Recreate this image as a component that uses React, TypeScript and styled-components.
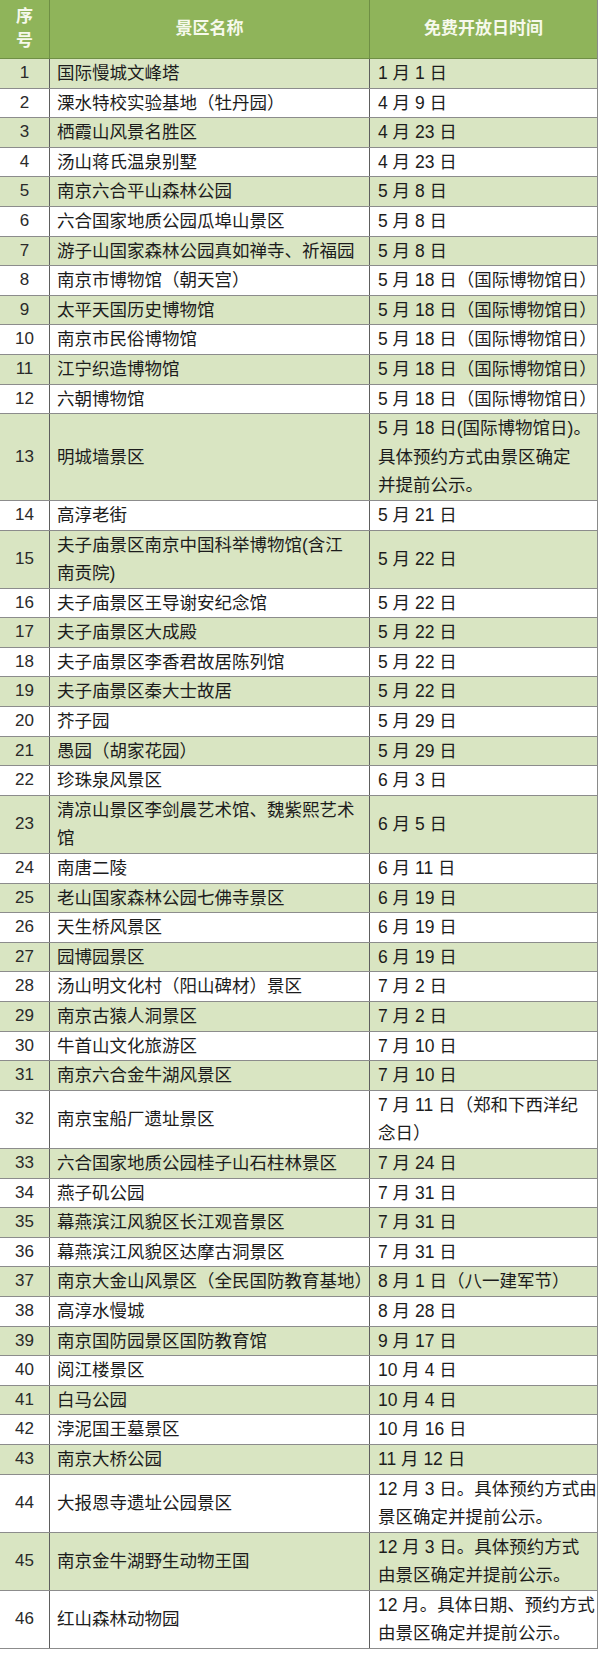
import React from "react";
import styled, { createGlobalStyle } from "styled-components";

type Spot = {
  no: number;
  name: string[];
  date: string[];
};

const same18 = ["5 月 18 日（国际博物馆日）"];
const same22 = ["5 月 22 日"];

const spots: Spot[] = [
  { no: 1, name: ["国际慢城文峰塔"], date: ["1 月 1 日"] },
  { no: 2, name: ["溧水特校实验基地（牡丹园）"], date: ["4 月 9 日"] },
  { no: 3, name: ["栖霞山风景名胜区"], date: ["4 月 23 日"] },
  { no: 4, name: ["汤山蒋氏温泉别墅"], date: ["4 月 23 日"] },
  { no: 5, name: ["南京六合平山森林公园"], date: ["5 月 8 日"] },
  { no: 6, name: ["六合国家地质公园瓜埠山景区"], date: ["5 月 8 日"] },
  { no: 7, name: ["游子山国家森林公园真如禅寺、祈福园"], date: ["5 月 8 日"] },
  { no: 8, name: ["南京市博物馆（朝天宫）"], date: same18 },
  { no: 9, name: ["太平天国历史博物馆"], date: same18 },
  { no: 10, name: ["南京市民俗博物馆"], date: same18 },
  { no: 11, name: ["江宁织造博物馆"], date: same18 },
  { no: 12, name: ["六朝博物馆"], date: same18 },
  {
    no: 13,
    name: ["明城墙景区"],
    date: ["5 月 18 日(国际博物馆日)。", "具体预约方式由景区确定", "并提前公示。"],
  },
  { no: 14, name: ["高淳老街"], date: ["5 月 21 日"] },
  { no: 15, name: ["夫子庙景区南京中国科举博物馆(含江", "南贡院)"], date: same22 },
  { no: 16, name: ["夫子庙景区王导谢安纪念馆"], date: same22 },
  { no: 17, name: ["夫子庙景区大成殿"], date: same22 },
  { no: 18, name: ["夫子庙景区李香君故居陈列馆"], date: same22 },
  { no: 19, name: ["夫子庙景区秦大士故居"], date: same22 },
  { no: 20, name: ["芥子园"], date: ["5 月 29 日"] },
  { no: 21, name: ["愚园（胡家花园）"], date: ["5 月 29 日"] },
  { no: 22, name: ["珍珠泉风景区"], date: ["6 月 3 日"] },
  { no: 23, name: ["清凉山景区李剑晨艺术馆、魏紫熙艺术", "馆"], date: ["6 月 5 日"] },
  { no: 24, name: ["南唐二陵"], date: ["6 月 11 日"] },
  { no: 25, name: ["老山国家森林公园七佛寺景区"], date: ["6 月 19 日"] },
  { no: 26, name: ["天生桥风景区"], date: ["6 月 19 日"] },
  { no: 27, name: ["园博园景区"], date: ["6 月 19 日"] },
  { no: 28, name: ["汤山明文化村（阳山碑材）景区"], date: ["7 月 2 日"] },
  { no: 29, name: ["南京古猿人洞景区"], date: ["7 月 2 日"] },
  { no: 30, name: ["牛首山文化旅游区"], date: ["7 月 10 日"] },
  { no: 31, name: ["南京六合金牛湖风景区"], date: ["7 月 10 日"] },
  { no: 32, name: ["南京宝船厂遗址景区"], date: ["7 月 11 日（郑和下西洋纪", "念日）"] },
  { no: 33, name: ["六合国家地质公园桂子山石柱林景区"], date: ["7 月 24 日"] },
  { no: 34, name: ["燕子矶公园"], date: ["7 月 31 日"] },
  { no: 35, name: ["幕燕滨江风貌区长江观音景区"], date: ["7 月 31 日"] },
  { no: 36, name: ["幕燕滨江风貌区达摩古洞景区"], date: ["7 月 31 日"] },
  { no: 37, name: ["南京大金山风景区（全民国防教育基地）"], date: ["8 月 1 日（八一建军节）"] },
  { no: 38, name: ["高淳水慢城"], date: ["8 月 28 日"] },
  { no: 39, name: ["南京国防园景区国防教育馆"], date: ["9 月 17 日"] },
  { no: 40, name: ["阅江楼景区"], date: ["10 月 4 日"] },
  { no: 41, name: ["白马公园"], date: ["10 月 4 日"] },
  { no: 42, name: ["浡泥国王墓景区"], date: ["10 月 16 日"] },
  { no: 43, name: ["南京大桥公园"], date: ["11 月 12 日"] },
  {
    no: 44,
    name: ["大报恩寺遗址公园景区"],
    date: ["12 月 3 日。具体预约方式由", "景区确定并提前公示。"],
  },
  {
    no: 45,
    name: ["南京金牛湖野生动物王国"],
    date: ["12 月 3 日。具体预约方式", "由景区确定并提前公示。"],
  },
  {
    no: 46,
    name: ["红山森林动物园"],
    date: ["12 月。具体日期、预约方式", "由景区确定并提前公示。"],
  },
];

const GlobalStyle = createGlobalStyle`
  body {
    margin: 0;
    background: #ffffff;
    font-family: "Liberation Sans", "Noto Sans CJK SC", sans-serif;
    color: #1c1c1c;
  }
`;

const Table = styled.div`
  width: 597px;
  border-right: 1px solid #8a8a8a;
`;

const columns = "50px 320px 1fr";

const HeaderRow = styled.div`
  display: grid;
  grid-template-columns: ${columns};
  height: 59px;
  background: #8fb45a;
  border-bottom: 1px solid #6f8f45;
  box-sizing: border-box;
`;

const HeaderCell = styled.div`
  display: flex;
  align-items: center;
  justify-content: center;
  text-align: center;
  color: #f6f9ec;
  font-size: 17px;
  font-weight: bold;
  line-height: 24px;
  border-right: 1px solid #6f8f45;

  &:last-child {
    border-right: none;
  }
`;

const Row = styled.div<{ $shaded: boolean }>`
  display: grid;
  grid-template-columns: ${columns};
  background: ${(p) => (p.$shaded ? "#d9e5c2" : "#ffffff")};
  border-bottom: 1px solid #8c8c8c;
`;

const Cell = styled.div<{ $center?: boolean }>`
  display: flex;
  flex-direction: column;
  justify-content: center;
  align-items: ${(p) => (p.$center ? "center" : "flex-start")};
  padding: 0 ${(p) => (p.$center ? "0" : "7px")};
  font-size: 17.5px;
  line-height: 28.6px;
  white-space: nowrap;
  border-right: 1px solid #5e5e5e;

  &:last-child {
    border-right: none;
    padding-left: 8px;
  }
`;

const NumberCell = styled(Cell)`
  font-size: 17px;
  color: #2a2a2a;
`;

export default function App() {
  return (
    <>
      <GlobalStyle />
      <Table>
        <HeaderRow>
          <HeaderCell>
            序
            <br />号
          </HeaderCell>
          <HeaderCell>景区名称</HeaderCell>
          <HeaderCell>免费开放日时间</HeaderCell>
        </HeaderRow>
        {spots.map((s) => (
          <Row key={s.no} $shaded={s.no % 2 === 1}>
            <NumberCell $center>{s.no}</NumberCell>
            <Cell>
              {s.name.map((line) => (
                <span key={line}>{line}</span>
              ))}
            </Cell>
            <Cell>
              {s.date.map((line) => (
                <span key={line}>{line}</span>
              ))}
            </Cell>
          </Row>
        ))}
      </Table>
    </>
  );
}
